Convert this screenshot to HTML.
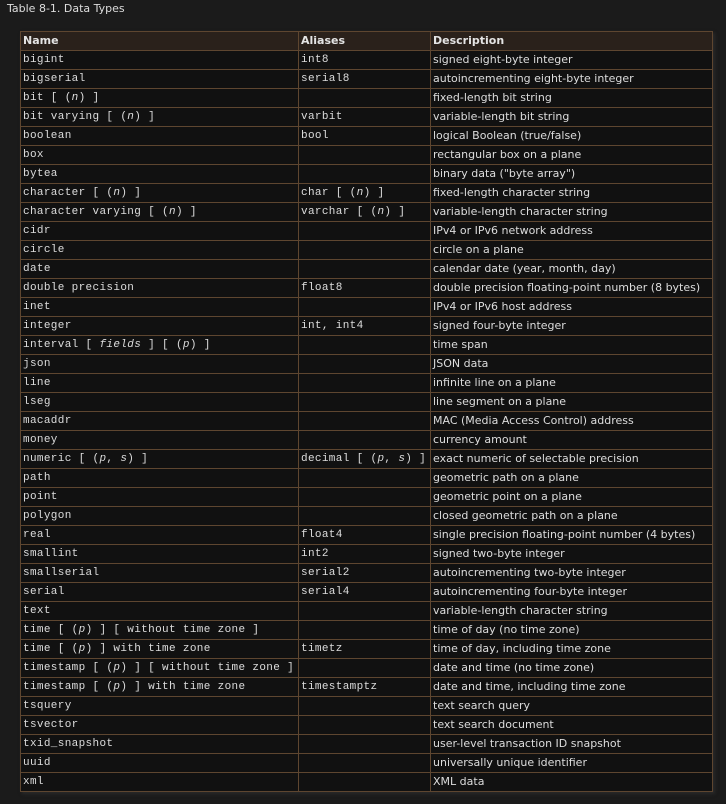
<!DOCTYPE html>
<html><head><meta charset="utf-8"><style>
body{margin:0;background:#1b1b1b;width:726px;height:804px;overflow:hidden;font-family:"DejaVu Sans","Liberation Sans",sans-serif;color:#ddd;}
.cap{position:absolute;left:7px;top:2px;font-size:11px;color:#ddd;}
table{position:absolute;left:20px;top:31px;border-collapse:collapse;background:#111;box-shadow:2px 2px 3px #2a2a2a;}
td,th{border:1px solid #5e4630;height:18px;padding:0 0 0 2px;font-size:11px;text-align:left;vertical-align:middle;white-space:nowrap;line-height:18px;}
th{background:#2a211b;font-weight:bold;color:#e4e4e4;}
td.m{font-family:"Liberation Mono",monospace;letter-spacing:0.35px;font-size:11px;}
i{font-style:italic;}
</style></head><body>
<div class="cap">Table 8-1. Data Types</div>
<table>
<colgroup><col style="width:278px"><col style="width:132px"><col style="width:282px"></colgroup>
<tr><th>Name</th><th>Aliases</th><th>Description</th></tr>
<tr><td class="m">bigint</td><td class="m">int8</td><td>signed eight-byte integer</td></tr>
<tr><td class="m">bigserial</td><td class="m">serial8</td><td>autoincrementing eight-byte integer</td></tr>
<tr><td class="m">bit [ (<i>n</i>) ]</td><td class="m"></td><td>fixed-length bit string</td></tr>
<tr><td class="m">bit varying [ (<i>n</i>) ]</td><td class="m">varbit</td><td>variable-length bit string</td></tr>
<tr><td class="m">boolean</td><td class="m">bool</td><td>logical Boolean (true/false)</td></tr>
<tr><td class="m">box</td><td class="m"></td><td>rectangular box on a plane</td></tr>
<tr><td class="m">bytea</td><td class="m"></td><td>binary data ("byte array")</td></tr>
<tr><td class="m">character [ (<i>n</i>) ]</td><td class="m">char [ (<i>n</i>) ]</td><td>fixed-length character string</td></tr>
<tr><td class="m">character varying [ (<i>n</i>) ]</td><td class="m">varchar [ (<i>n</i>) ]</td><td>variable-length character string</td></tr>
<tr><td class="m">cidr</td><td class="m"></td><td>IPv4 or IPv6 network address</td></tr>
<tr><td class="m">circle</td><td class="m"></td><td>circle on a plane</td></tr>
<tr><td class="m">date</td><td class="m"></td><td>calendar date (year, month, day)</td></tr>
<tr><td class="m">double precision</td><td class="m">float8</td><td>double precision floating-point number (8 bytes)</td></tr>
<tr><td class="m">inet</td><td class="m"></td><td>IPv4 or IPv6 host address</td></tr>
<tr><td class="m">integer</td><td class="m">int, int4</td><td>signed four-byte integer</td></tr>
<tr><td class="m">interval [ <i>fields</i> ] [ (<i>p</i>) ]</td><td class="m"></td><td>time span</td></tr>
<tr><td class="m">json</td><td class="m"></td><td>JSON data</td></tr>
<tr><td class="m">line</td><td class="m"></td><td>infinite line on a plane</td></tr>
<tr><td class="m">lseg</td><td class="m"></td><td>line segment on a plane</td></tr>
<tr><td class="m">macaddr</td><td class="m"></td><td>MAC (Media Access Control) address</td></tr>
<tr><td class="m">money</td><td class="m"></td><td>currency amount</td></tr>
<tr><td class="m">numeric [ (<i>p</i>, <i>s</i>) ]</td><td class="m">decimal [ (<i>p</i>, <i>s</i>) ]</td><td>exact numeric of selectable precision</td></tr>
<tr><td class="m">path</td><td class="m"></td><td>geometric path on a plane</td></tr>
<tr><td class="m">point</td><td class="m"></td><td>geometric point on a plane</td></tr>
<tr><td class="m">polygon</td><td class="m"></td><td>closed geometric path on a plane</td></tr>
<tr><td class="m">real</td><td class="m">float4</td><td>single precision floating-point number (4 bytes)</td></tr>
<tr><td class="m">smallint</td><td class="m">int2</td><td>signed two-byte integer</td></tr>
<tr><td class="m">smallserial</td><td class="m">serial2</td><td>autoincrementing two-byte integer</td></tr>
<tr><td class="m">serial</td><td class="m">serial4</td><td>autoincrementing four-byte integer</td></tr>
<tr><td class="m">text</td><td class="m"></td><td>variable-length character string</td></tr>
<tr><td class="m">time [ (<i>p</i>) ] [ without time zone ]</td><td class="m"></td><td>time of day (no time zone)</td></tr>
<tr><td class="m">time [ (<i>p</i>) ] with time zone</td><td class="m">timetz</td><td>time of day, including time zone</td></tr>
<tr><td class="m">timestamp [ (<i>p</i>) ] [ without time zone ]</td><td class="m"></td><td>date and time (no time zone)</td></tr>
<tr><td class="m">timestamp [ (<i>p</i>) ] with time zone</td><td class="m">timestamptz</td><td>date and time, including time zone</td></tr>
<tr><td class="m">tsquery</td><td class="m"></td><td>text search query</td></tr>
<tr><td class="m">tsvector</td><td class="m"></td><td>text search document</td></tr>
<tr><td class="m">txid_snapshot</td><td class="m"></td><td>user-level transaction ID snapshot</td></tr>
<tr><td class="m">uuid</td><td class="m"></td><td>universally unique identifier</td></tr>
<tr><td class="m">xml</td><td class="m"></td><td>XML data</td></tr>
</table>
</body></html>
